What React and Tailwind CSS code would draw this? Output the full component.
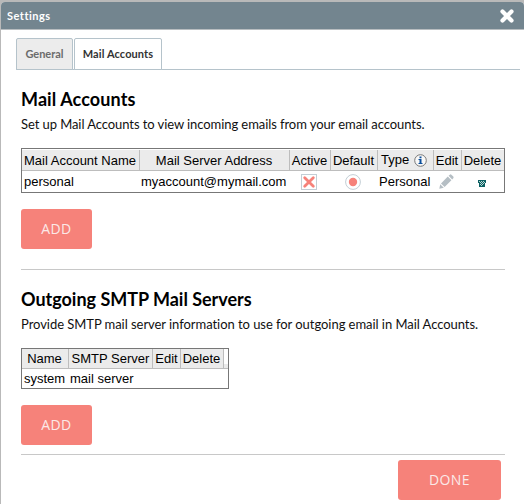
import React from "react";

function Tab({ active, className, children }) {
  return (
    <div
      className={`h-8 rounded-t-[2px] border border-[#b5c3cb] text-[11px] leading-[30px] font-bold text-center whitespace-nowrap ${
        active ? "bg-white text-[#333]" : "bg-[#ececec] text-[#6b6b6b]"
      } ${className}`}
    >
      {children}
    </div>
  );
}

function Button({ className, children }) {
  return (
    <button
      className={`block h-10 rounded-[3px] bg-[#f6827a] text-center font-['Open_Sans',sans-serif] text-[14px] leading-[38px] tracking-[0.4px] text-[#fbe9e8] ${className}`}
    >
      {children}
    </button>
  );
}

function Head({ className, children }) {
  return (
    <div className={`shrink-0 whitespace-nowrap border-r border-[#bdbdbd] bg-[#ebebeb] text-center ${className}`}>
      {children}
    </div>
  );
}

function Section({ title, text, titleClass, textClass }) {
  return (
    <>
      <h2 className="h-6 text-[18px] leading-6 font-bold whitespace-nowrap text-black">
        <span className={titleClass}>{title}</span>
      </h2>
      <p className="mt-[3px] h-5 text-[13px] leading-5 whitespace-nowrap text-[#111]">
        <span className={textClass}>{text}</span>
      </p>
    </>
  );
}

function InfoIcon() {
  return (
    <svg width="13" height="13" viewBox="0 0 13 13" className="block">
      <circle cx="6.5" cy="6.5" r="5.8" fill="#f8f8f8" stroke="#777" strokeWidth="1" />
      <path d="M5.5 2.5h2v1.7h-2zM4.5 5h3v4h1v1h-4V9h1V6h-1z" fill="#0b4e9b" />
    </svg>
  );
}

function PencilIcon() {
  return (
    <svg width="15" height="15" viewBox="0 0 15 15" className="block" fill="#b5bec4">
      <path d="M.3 14.7 1.2 10.2 4.8 13.8ZM2 9.4 8.8 2.6 12.4 6.2 5.6 13ZM9.6 1.8 10.8.7Q11.6 0 12.4.7L14.3 2.6Q15 3.4 14.3 4.2L13.2 5.4Z" />
    </svg>
  );
}

function BinIcon() {
  return (
    <svg width="8" height="7" viewBox="0 0 8 7" className="block" shapeRendering="crispEdges">
      <path d="M0 0h8v3H7v4H1V3H0z" fill="#0c6062" />
      <path
        d="M1 1h1v1H1zM3 1h1v1H3zM5 1h1v1H5zM2 2h1v1H2zM4 2h1v1H4zM6 2h1v1H6zM3 3h1v1H3zM5 3h1v1H5zM2 4h1v1H2zM4 4h1v1H4zM3 5h1v1H3z"
        fill="#b9d6d4"
      />
    </svg>
  );
}

export default function App() {
  return (
    <div className="h-[504px] w-[524px] overflow-hidden bg-[#b9b9b9] pt-[2px] pl-px font-['Lato',sans-serif]">
      <div className="h-[502px] overflow-hidden rounded-t-[4px] bg-white">
        <header className="flex h-7 items-center justify-between border-b border-[#b8bdc0] bg-[#73858f] pr-[9px] pl-[6px]">
          <span className="text-[11px] leading-none font-bold tracking-[0.5px] text-white">Settings</span>
          <svg width="16" height="16" viewBox="0 0 16 16">
            <path d="M3.5 3.5 12.5 12.5M12.5 3.5 3.5 12.5" stroke="#fff" strokeWidth="4.2" strokeLinecap="round" />
          </svg>
        </header>

        <nav className="mt-2 mr-[4px] ml-[15px] flex h-8 gap-px border-b border-[#b5c3cb]">
          <Tab className="w-[57px]">General</Tab>
          <Tab active className="w-[88px] tracking-[0.1px]">Mail Accounts</Tab>
        </nav>

        <main className="ml-5 w-[484px]">
          <div className="pt-[17px]">
            <Section
              title="Mail Accounts"
              titleClass="tracking-[0.1px]"
              text="Set up Mail Accounts to view incoming emails from your email accounts."
              textClass="tracking-[-0.075px]"
            />
          </div>

          <div className="mt-[14px] h-[45px] border border-[#777] font-['Liberation_Sans',sans-serif] text-[13px] text-black">
            <div className="flex h-[22px] border-b border-[#bdbdbd] pt-px leading-[22px]">
              <Head className="w-[118px] pr-px">Mail Account Name</Head>
              <Head className="w-[150px] pr-px">Mail Server Address</Head>
              <Head className="w-[41px] pr-px">Active</Head>
              <Head className="w-[47px] pr-px">Default</Head>
              <Head className="flex w-[56px] items-center gap-[5px] pl-[3px] leading-[19px]">
                <span className="h-[21px]">Type</span>
                <InfoIcon />
              </Head>
              <Head className="w-[28px] pr-px">Edit</Head>
              <Head className="w-[42px] border-r-0 pr-px">Delete</Head>
            </div>
            <div className="flex h-[21px] items-center leading-[21px]">
              <div className="w-[118px] pl-[2px]">personal</div>
              <div className="w-[150px] pl-px">myaccount@mymail.com</div>
              <div className="flex w-[41px] pl-[11px]">
                <svg width="16" height="16" viewBox="0 0 16 16">
                  <rect x=".5" y=".5" width="15" height="15" fill="#fff" stroke="#c3ced5" />
                  <path d="M3.7 3.7 12.3 12.3M12.3 3.7 3.7 12.3" stroke="#f6827a" strokeWidth="2.8" strokeLinecap="round" />
                </svg>
              </div>
              <div className="flex w-[47px] pl-[14px]">
                <svg width="16" height="16" viewBox="0 0 16 16">
                  <circle cx="8" cy="8" r="7.4" fill="#fff" stroke="#c3ced5" />
                  <circle cx="8" cy="8" r="4.2" fill="#f6827a" />
                </svg>
              </div>
              <div className="w-[56px] pl-px">Personal</div>
              <div className="flex w-[28px] pl-[5px]"><PencilIcon /></div>
              <div className="flex w-[42px] pt-[3px] pl-4"><BinIcon /></div>
            </div>
          </div>

          <Button className="mt-4 w-[71px]">ADD</Button>

          <div className="mt-5 border-t border-[#c8c8c8] pt-[17px]">
            <Section
              title="Outgoing SMTP Mail Servers"
              titleClass="tracking-[-0.02px]"
              text="Provide SMTP mail server information to use for outgoing email in Mail Accounts."
              textClass="tracking-[-0.05px]"
            />
          </div>

          <div className="mt-[14px] h-[41px] w-[208px] border border-[#777] font-['Liberation_Sans',sans-serif] text-[13px] text-black">
            <div className="flex h-5 border-b border-[#bdbdbd] leading-[20px]">
              <Head className="w-[47px] pr-px">Name</Head>
              <Head className="w-[84px]">SMTP Server</Head>
              <Head className="w-[28px]">Edit</Head>
              <Head className="w-[43px] pr-px">Delete</Head>
              <div className="mt-auto h-1 grow bg-[#ebebeb]" />
            </div>
            <div className="flex h-[19px] leading-[19px]">
              <div className="w-[47px] pl-[2px]">system</div>
              <div className="pl-px">mail server</div>
            </div>
          </div>

          <Button className="mt-4 w-[71px]">ADD</Button>
          <div className="mt-[9px] flex h-[50px] justify-end border-t border-[#c8c8c8] pt-[5px] pr-1">
            <Button className="w-[103px]">DONE</Button>
          </div>
        </main>
      </div>
    </div>
  );
}
